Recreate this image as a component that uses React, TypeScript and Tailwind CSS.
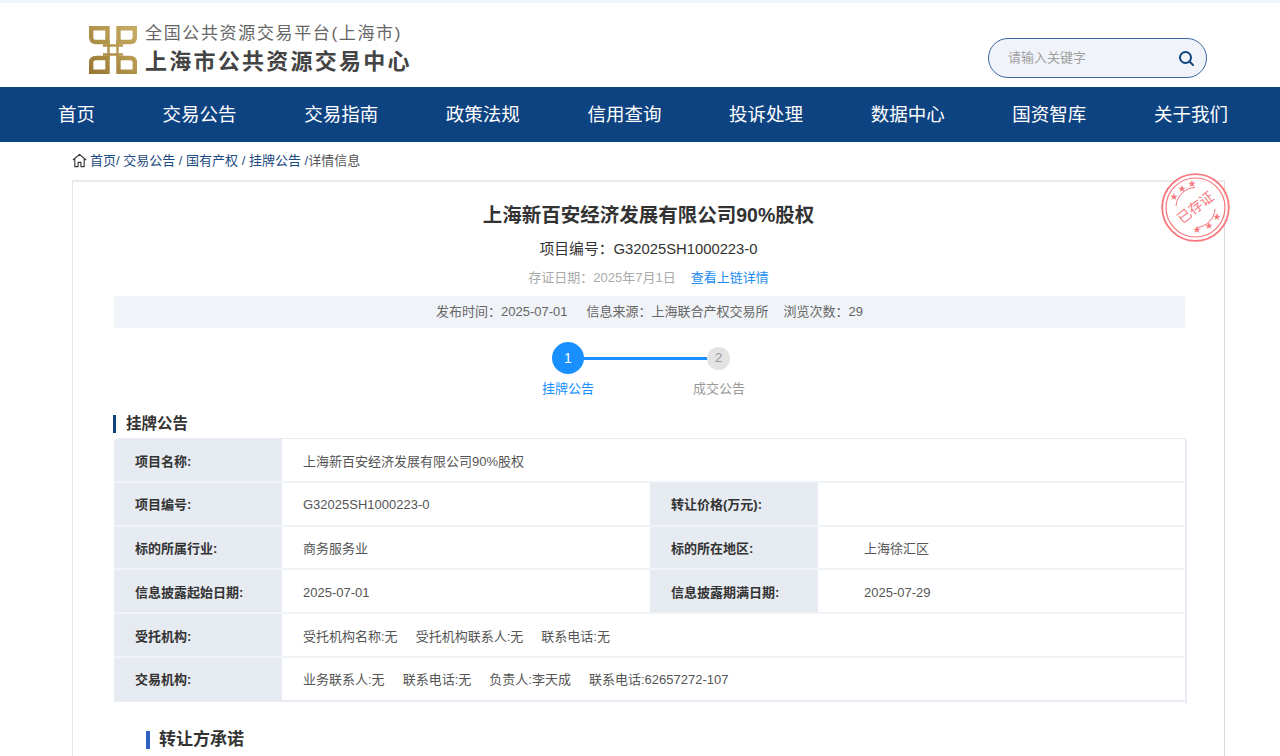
import React from "react";

const nav = ["首页","交易公告","交易指南","政策法规","信用查询","投诉处理","数据中心","国资智库","关于我们"];

function Logo() {
  return (
    <svg width="48" height="48" viewBox="0 0 48 48" className="shrink-0">
      <defs>
        <linearGradient id="g" gradientUnits="userSpaceOnUse" x1="0" y1="48" x2="48" y2="0">
          <stop offset="0" stopColor="#94742f" />
          <stop offset="0.5" stopColor="#b2934a" />
          <stop offset="1" stopColor="#c9ae68" />
        </linearGradient>
      </defs>
      <g fill="none" stroke="url(#g)">
        <path d="M2.200 2.200H18.500V16H7Q2.200 16 2.200 11.500Z" strokeWidth="4.400" />
        <path d="M45.800 2.200H29.500V16H41Q45.800 16 45.800 11.500Z" strokeWidth="4.400" />
        <path d="M2.200 45.800H18.500V32H7Q2.200 32 2.200 36.500Z" strokeWidth="4.400" />
        <path d="M45.800 45.800H29.500V32H41Q45.800 32 45.800 36.500Z" strokeWidth="4.400" />
        <path d="M19.500 14V34M28.500 14V34M14 19.500H34M14 28.500H34" strokeWidth="2.400" />
      </g>
    </svg>
  );
}

function Stamp() {
  const stars: [number, number][] = [[13,24],[21,16],[31,11],[56,44],[48,53],[36,57]];
  return (
    <svg width="70" height="70" viewBox="0 0 70 70" className="absolute left-[1088px] top-[-9px]">
      <circle cx="34.500" cy="34.500" r="33.300" fill="#fff" fillOpacity="0.6" stroke="#f7767c" strokeWidth="1.800" />
      <circle cx="34.500" cy="34.500" r="29.500" fill="none" stroke="#f7767c" strokeWidth="1.200" />
      <path d="M15 33A20 20 0 0 1 34 14.500" fill="none" stroke="#f7767c" strokeWidth="1" />
      <path d="M54 36A20 20 0 0 1 36 54.500" fill="none" stroke="#f7767c" strokeWidth="1" />
      {stars.map(([x, y], i) => (
        <text key={i} x={x} y={y} fontSize="8" fill="#f7767c" textAnchor="middle" dominantBaseline="middle">★</text>
      ))}
      <text x="34.500" y="35.500" fontSize="14" fill="#f7767c" textAnchor="middle" dominantBaseline="middle" transform="rotate(-38 34.500 34.500)" fontFamily="'Noto Sans CJK SC', sans-serif" fontWeight="400">已存证</text>
    </svg>
  );
}

function Row({ children, last }: { children: React.ReactNode; last?: boolean }) {
  return <div className={`flex h-[43.750px] border-b-2 ${last ? "border-[#e8ecf2]" : "border-[#f0f3f8]"}`}>{children}</div>;
}
function Label({ children, w = "w-[168px]", pl = "pl-[21px]" }: { children: React.ReactNode; w?: string; pl?: string }) {
  return <div className={`${w} ${pl} pt-[3px] shrink-0 bg-[#e6eaf1] flex items-center text-[13px] font-bold text-[#333]`}>{children}</div>;
}
function Val({ children, w = "w-[368px]", pl = "pl-[21px]" }: { children: React.ReactNode; w?: string; pl?: string }) {
  return <div className={`${w} ${pl} pt-[3px] shrink-0 flex items-center text-[13px] text-[#555] whitespace-pre`}>{children}</div>;
}

export default function App() {
  return (
    <div className="w-[1280px] h-[756px] overflow-hidden bg-white text-[#333] font-['Liberation_Sans','Noto_Sans_CJK_SC',sans-serif]">
      <div className="h-[3px] bg-[#eef5fc]" />
      <header className="h-[84px] flex items-start">
        <div className="ml-[89px] mt-[21px] flex items-center gap-[8px]">
          <Logo />
          <div className="flex flex-col">
            <div className="text-[17px] leading-[20px] tracking-[1.650px] text-[#666]">全国公共资源交易平台(上海市)</div>
            <div className="text-[22px] leading-[28px] mt-[4px] font-bold tracking-[2.250px] text-[#444]">上海市公共资源交易中心</div>
          </div>
        </div>
        <div className="ml-auto mr-[73px] mt-[35px] w-[219px] h-[40px] rounded-[20px] border border-[#3a689f] bg-[#f0f3f9] flex items-center pl-[19px] pr-[11px]">
          <span className="text-[13px] text-[#a0a0a0]">请输入关键字</span>
          <svg className="ml-auto" width="17" height="17" viewBox="0 0 17 17" fill="none" stroke="#0e4382" strokeWidth="2">
            <circle cx="7.500" cy="7.500" r="5.500" />
            <path d="M11.700 11.700 15 15" strokeLinecap="round" />
          </svg>
        </div>
      </header>
      <nav className="h-[55px] bg-[#0e4382] flex justify-between pl-[58px] pr-[52px] items-center">
        {nav.map((n) => (
          <span key={n} className="text-[18.500px] text-white font-normal">{n}</span>
        ))}
      </nav>
      <div className="h-[38px] pl-[72px] flex items-center text-[13px] text-[#1b4a80]">
        <svg width="15" height="15" viewBox="0 0 16 16" fill="none" stroke="#333" strokeWidth="1.200" className="mr-[3px] mb-[2px]">
          <path d="M1 7.500 8 1.500l7 6M3 6.500V14.500h3.500V10h3v4.500H13V6.500" strokeLinejoin="round" />
        </svg>
        <span>首页/&nbsp;交易公告 / 国有产权 / 挂牌公告 /</span><span className="text-[#555]">详情信息</span>
      </div>
      <main className="relative ml-[72px] w-[1153px] h-[600px] border-l border-r border-t-2 border-l-[#e6e6e6] border-r-[#d9d9d9] border-t-[#eaeaea]">
        <Stamp />
        <div className="text-center text-[19.500px] font-bold text-[#333] leading-[26px] pt-[20px]">上海新百安经济发展有限公司90%股权</div>
        <div className="text-center text-[14.800px] text-[#333] leading-[20px] mt-[11px]">项目编号：G32025SH1000223-0</div>
        <div className="text-center text-[13px] leading-[18px] mt-[10px] text-[#aaa]">存证日期：2025年7月1日<span className="ml-[15px] text-[#1c8cf0]">查看上链详情</span></div>
        <div className="ml-[41px] mr-[39px] mt-[9px] h-[32px] bg-[#f0f3f7] flex items-center justify-center text-[13px] text-[#666] whitespace-pre rounded-[2px]">
          <span>发布时间：2025-07-01</span><span className="ml-[19px]">信息来源：上海联合产权交易所</span><span className="ml-[15px]">浏览次数：29</span>
        </div>
        <div className="relative ml-[479px] mt-[14px] w-[178px] h-[32px] flex items-center">
          <div className="absolute left-[16px] w-[146px] h-[3px] bg-[#1890ff]" />
          <div className="relative w-[32px] h-[32px] rounded-full bg-[#1890ff] text-white flex items-center justify-center text-[14px]">1</div>
          <div className="relative ml-auto w-[23px] h-[23px] rounded-full bg-[#e3e3e3] text-[#999] flex items-center justify-center text-[13px]">2</div>
        </div>
        <div className="flex h-[18px] mt-[6px] text-[13px] leading-[18px]">
          <span className="ml-[469px] text-[#1890ff]">挂牌公告</span>
          <span className="ml-[99px] text-[#999]">成交公告</span>
        </div>
        <div className="ml-[40px] mt-[17px] h-[18px] border-l-[3px] border-[#0e4382] pl-[10px] text-[15.500px] font-bold leading-[18px] text-[#333]">挂牌公告</div>
        <section className="ml-[41px] w-[1073px] mt-[5px] pb-[2px] rounded-t-[4px] border-r-2 border-t border-[#e8edf3] overflow-hidden">
          <Row><Label>项目名称:</Label><Val w="w-[900px]">上海新百安经济发展有限公司90%股权</Val></Row>
          <Row><Label>项目编号:</Label><Val>G32025SH1000223-0</Val><Label>转让价格(万元):</Label></Row>
          <Row><Label>标的所属行业:</Label><Val>商务服务业</Val><Label>标的所在地区:</Label><Val w="w-[300px]" pl="pl-[46px]">上海徐汇区</Val></Row>
          <Row><Label>信息披露起始日期:</Label><Val>2025-07-01</Val><Label>信息披露期满日期:</Label><Val w="w-[300px]" pl="pl-[46px]">2025-07-29</Val></Row>
          <Row><Label>受托机构:</Label><Val w="w-[800px]">受托机构名称:无     受托机构联系人:无     联系电话:无</Val></Row>
          <Row last><Label>交易机构:</Label><Val w="w-[800px]">业务联系人:无     联系电话:无     负责人:李天成     联系电话:62657272-107</Val></Row>
        </section>
        <div className="ml-[73px] mt-[27px] h-[18px] border-l-[4px] border-[#2f62c0] pl-[9px] text-[17px] font-bold leading-[18px] text-[#333]">转让方承诺</div>
      </main>
    </div>
  );
}
